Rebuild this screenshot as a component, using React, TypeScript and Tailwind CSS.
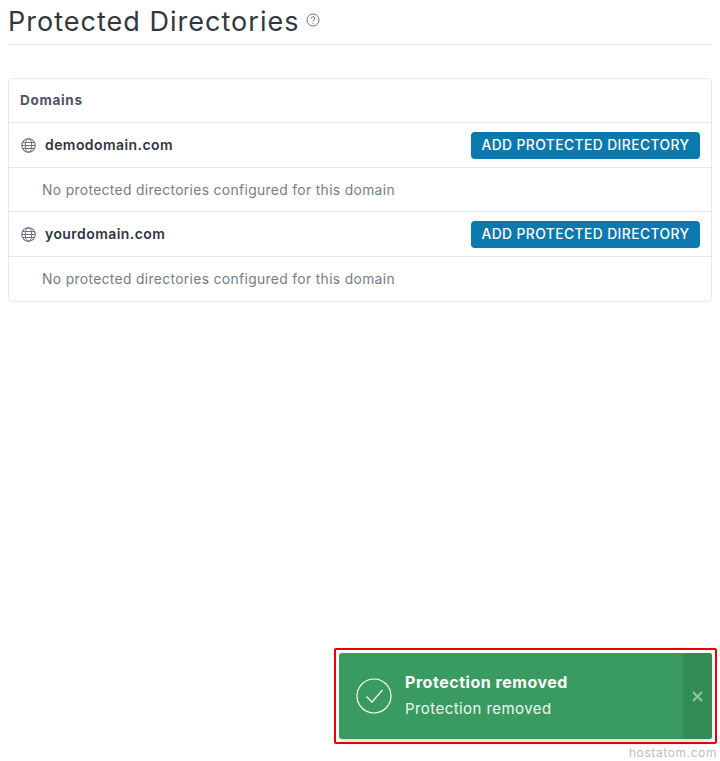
import React from "react";

const font = { fontFamily: "Inter, 'Noto Sans', sans-serif" };

function GlobeIcon() {
  return (
    <svg width="15" height="15" viewBox="0 0 14 14" fill="none" stroke="#6b7280" strokeWidth="1" className="shrink-0">
      <circle cx="7" cy="7" r="6.3" />
      <ellipse cx="7" cy="7" rx="3" ry="6.3" />
      <path d="M1.6 4.2h10.8M1.6 9.8h10.8M.7 7h12.6" />
    </svg>
  );
}

function DomainBlock({ name, last }: { name: string; last?: boolean }) {
  return (
    <>
      <div className="flex h-[45px] items-center justify-between border-b border-[#e7e7e7] pl-3 pr-[11px]">
        <div className="flex items-center gap-[9px]">
          <GlobeIcon />
          <span className="-mt-[1px] text-[14px] font-semibold leading-5 tracking-[0.43px] text-[#2f3640]">{name}</span>
        </div>
        <button className="flex h-[27px] w-[229px] items-center justify-center rounded bg-[#0c79ae] text-[13.8px] font-medium leading-5 tracking-[0.43px] text-white">
          ADD PROTECTED DIRECTORY
        </button>
      </div>
      <div className={`flex h-[44px] items-center pl-[33px] text-[13.8px] leading-5 tracking-[0.36px] text-[#767c84] ${last ? "" : "border-b border-[#e7e7e7]"}`}>
        No protected directories configured for this domain
      </div>
    </>
  );
}

export default function App() {
  return (
    <div className="relative h-[761px] overflow-hidden bg-white px-2" style={font}>
      <div className="flex h-[45px] items-start border-b border-[#e5e5e5]">
        <h1 className="text-[27px] leading-[43px] tracking-[1.02px] text-[#32373e]">Protected Directories</h1>
        <svg width="14" height="14" viewBox="0 0 14 14" fill="none" stroke="#6b7280" className="ml-[6px] mt-[13px]">
          <circle cx="7" cy="7" r="6" />
          <path d="M5.2 5.6a1.8 1.8 0 1 1 2.7 1.5c-.6.4-.9.7-.9 1.4" />
          <path d="M7 9.7v1" />
        </svg>
      </div>

      <div className="mt-[33px] overflow-hidden rounded-[5px] border border-[#e7e7e7]">
        <div className="flex h-[44px] items-center border-b border-[#e7e7e7] px-[11px] text-[13.5px] font-bold tracking-[0.7px] text-[#4b5563]">
          Domains
        </div>
        <DomainBlock name="demodomain.com" />
        <DomainBlock name="yourdomain.com" last />
      </div>

      <div className="absolute left-[334px] top-[648px] h-[96px] w-[383px] rounded-[2px] border-2 border-[#ee0000] p-[3px]">
        <div className="flex h-[86px] overflow-hidden rounded-[3px] bg-[#399b60] shadow-md">
          <div className="flex flex-1 items-center">
            <svg width="36" height="36" viewBox="0 0 36 36" fill="none" stroke="#ffffff" strokeWidth="1.2" className="ml-[17px]">
              <circle cx="18" cy="18" r="17" />
              <path d="M10.5 18.5l5.5 5.5L26.5 12" />
            </svg>
            <div className="ml-[13px] pb-[2px] text-white">
              <div className="text-[16px] font-bold leading-5 tracking-[0.53px]">Protection removed</div>
              <div className="mt-[7px] text-[15px] leading-5 tracking-[0.44px] text-[#eef7f1]">Protection removed</div>
            </div>
          </div>
          <div className="flex w-[29px] items-center justify-center bg-[#338b56] text-[#8fc6a5]">
            <svg width="11" height="11" viewBox="0 0 11 11" stroke="currentColor" strokeWidth="2">
              <path d="M1 1l9 9M10 1l-9 9" />
            </svg>
          </div>
        </div>
      </div>

      <div className="absolute bottom-0 right-[3px] text-[12px] leading-4 tracking-[0.6px] text-[#bdbdbd]">hostatom.com</div>
    </div>
  );
}
